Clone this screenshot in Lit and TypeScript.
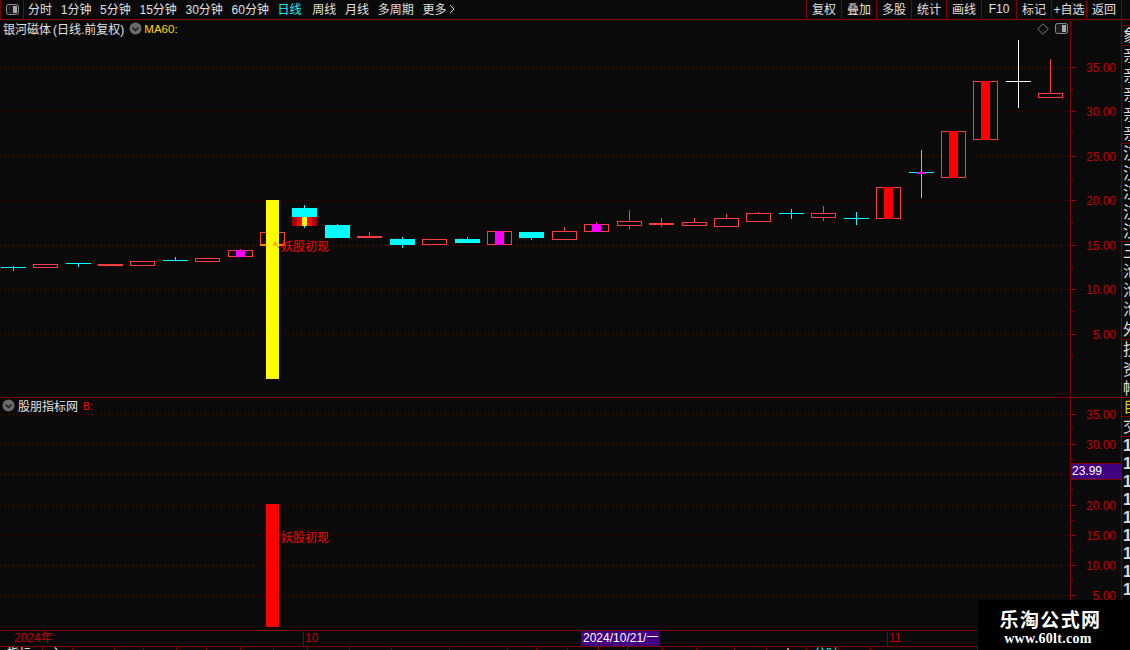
import { LitElement, html, css, svg } from "lit";
import { customElement } from "lit/decorators.js";

const RED = "#ff3c3c";
const CYAN = "#00ffff";
const WHITE = "#ffffff";
const MAGENTA = "#ff00ff";

// x = left edge, top/bottom = body, hi/lo = wick, fill = inner bar colour
interface Candle {
  x: number;
  top: number;
  bottom: number;
  hi?: number;
  lo?: number;
  kind: "hollow" | "solid" | "cyan" | "white";
  fill?: string;
}

const candles: Candle[] = [
  { x: 1, top: 267, bottom: 267, hi: 266, lo: 270, kind: "cyan" },
  { x: 33, top: 264, bottom: 267, kind: "hollow" },
  { x: 66, top: 263, bottom: 263, lo: 266, kind: "cyan" },
  { x: 98, top: 264, bottom: 265, kind: "solid" },
  { x: 130, top: 261, bottom: 265, kind: "hollow" },
  { x: 163, top: 260, bottom: 260, hi: 257, kind: "cyan" },
  { x: 195, top: 258, bottom: 261, kind: "hollow" },
  { x: 228, top: 250, bottom: 256, hi: 249, kind: "hollow", fill: MAGENTA },
  { x: 260, top: 232, bottom: 244, kind: "hollow" },
  { x: 325, top: 225, bottom: 237, hi: 224, kind: "cyan" },
  { x: 357, top: 236, bottom: 237, hi: 232, kind: "solid" },
  { x: 390, top: 239, bottom: 244, hi: 237, lo: 247, kind: "cyan" },
  { x: 422, top: 239, bottom: 244, kind: "hollow" },
  { x: 455, top: 239, bottom: 242, hi: 237, kind: "cyan" },
  { x: 487, top: 231, bottom: 244, kind: "hollow", fill: MAGENTA },
  { x: 519, top: 232, bottom: 237, lo: 239, kind: "cyan" },
  { x: 552, top: 231, bottom: 239, hi: 227, kind: "hollow" },
  { x: 584, top: 224, bottom: 231, hi: 222, kind: "hollow", fill: MAGENTA },
  { x: 617, top: 221, bottom: 225, hi: 210, lo: 228, kind: "hollow" },
  { x: 649, top: 223, bottom: 224, hi: 218, lo: 226, kind: "solid" },
  { x: 682, top: 222, bottom: 225, hi: 218, kind: "hollow" },
  { x: 714, top: 218, bottom: 226, hi: 214, kind: "hollow" },
  { x: 746, top: 213, bottom: 221, hi: 212, kind: "hollow" },
  { x: 779, top: 213, bottom: 213, hi: 209, lo: 218, kind: "cyan" },
  { x: 811, top: 213, bottom: 217, hi: 206, lo: 220, kind: "hollow" },
  { x: 844, top: 218, bottom: 218, hi: 212, lo: 224, kind: "cyan" },
  { x: 876, top: 187, bottom: 218, kind: "hollow", fill: "#ff0000" },
  { x: 909, top: 172, bottom: 172, hi: 150, lo: 197, kind: "cyan", fill: MAGENTA },
  { x: 941, top: 131, bottom: 177, kind: "hollow", fill: "#ff0000" },
  { x: 973, top: 81, bottom: 139, kind: "hollow", fill: "#ff0000" },
  { x: 1006, top: 81, bottom: 81, hi: 40, lo: 107, kind: "white" },
  { x: 1038, top: 93, bottom: 97, hi: 59, kind: "hollow" },
];

const upperTicks = [
  { label: "35.00", y: 67 },
  { label: "30.00", y: 111 },
  { label: "25.00", y: 156 },
  { label: "20.00", y: 200 },
  { label: "15.00", y: 245 },
  { label: "10.00", y: 289 },
  { label: "5.00", y: 334 },
];

// 25.00 sits under the live price tag, so it has no label of its own
const lowerTicks = [
  { label: "35.00", y: 414 },
  { label: "30.00", y: 444 },
  { label: "", y: 474 },
  { label: "20.00", y: 505 },
  { label: "15.00", y: 535 },
  { label: "10.00", y: 565 },
  { label: "5.00", y: 595 },
];

const periods = ["分时", "1分钟", "5分钟", "15分钟", "30分钟", "60分钟", "日线", "周线", "月线", "多周期", "更多"];
const actions = ["复权", "叠加", "多股", "统计", "画线", "F10", "标记", "+自选", "返回"];

const stripUpper = [
  ["象"],
  ["亲", "亲", "亲", "亲", "亲"],
  ["汉", "汉", "汉", "汉", "汉"],
  ["王", "沧", "沧", "沧", "外"],
  ["技", "资", "帐"],
];
const stripLower = ["1", "1", "1", "1", "1", "1", "1", "1", "1"];

// right edges of the tab strip below the time axis
const footEdges = [43, 73, 115, 144, 177, 207, 241, 274, 308, 350, 392, 450, 508, 537, 568, 599, 628, 663, 697, 735, 767, 807, 839, 871, 978];
const footText: Record<number, { text: string; pad: number; cyan?: boolean }> = {
  0: { text: "指标", pad: 7 },
  1: { text: "主", pad: 7 },
  21: { text: "卜", pad: 16 },
  22: { text: "分时", pad: 7, cyan: true },
};

function candleSvg(c: Candle) {
  const mid = c.x + 12.5;
  const color = c.kind === "hollow" || c.kind === "solid" ? RED : c.kind === "cyan" ? CYAN : WHITE;
  const wickTop = c.hi ?? c.top;
  const wickBottom = c.lo ?? c.bottom;
  const isLine = c.top === c.bottom;
  return svg`
    ${c.hi !== undefined || c.lo !== undefined
      ? svg`<line x1=${Math.floor(mid) + 0.5} x2=${Math.floor(mid) + 0.5} y1=${wickTop} y2=${wickBottom + 1} stroke=${color} />`
      : ""}
    ${isLine
      ? svg`<rect x=${c.x} y=${c.top} width="25" height="1" fill=${color} />`
      : c.kind === "hollow"
        ? svg`<rect x=${c.x + 0.5} y=${c.top + 0.5} width="24" height=${c.bottom - c.top} fill="#0a0a0a" stroke=${color} />`
        : svg`<rect x=${c.x} y=${c.top} width="25" height=${c.bottom - c.top + 1} fill=${color} />`}
    ${c.fill
      ? svg`<rect x=${c.x + 8} y=${c.top} width="9" height=${isLine ? 2 : c.bottom - c.top + 1} fill=${c.fill} />`
      : ""}
  `;
}

// the strongest candle: cyan upper half over a red-to-yellow band
function limitCandle() {
  const band = [
    { x: 292, w: 5, c: "#a80000" },
    { x: 297, w: 5, c: "#ff0000" },
    { x: 302, w: 5, c: "#ffff00" },
    { x: 307, w: 5, c: "#ff0000" },
    { x: 312, w: 5, c: "#a80000" },
  ];
  return svg`
    <line x1="304.5" x2="304.5" y1="205" y2="228" stroke=${CYAN} />
    <rect x="292" y="208" width="25" height="9" fill=${CYAN} />
    ${band.map((b) => svg`<rect x=${b.x} y="217" width=${b.w} height="9" fill=${b.c} />`)}
  `;
}

const panelIcon = html`<svg class="panel-icon" width="13" height="12" viewBox="0 0 13 12">
  <rect x="0.5" y="0.5" width="12" height="10" rx="2" fill="#1c1c1c" stroke="#8a8a8a" />
  <rect x="7" y="2" width="4" height="7" fill="#a8a8a8" />
</svg>`;

const roundChevron = html`<svg class="chevron" width="13" height="13" viewBox="0 0 13 13">
  <circle cx="6.5" cy="6.5" r="6" fill="#6a6a6a" />
  <path d="M3.5 5.5 L6.5 8.5 L9.5 5.5" fill="none" stroke="#161616" stroke-width="1.3" />
</svg>`;

@customElement("app-root")
export class AppRoot extends LitElement {
  static styles = css`
    :host {
      display: block;
      position: relative;
      width: 1130px;
      height: 650px;
      overflow: hidden;
      background: #0a0a0a;
      color: #e0e0e0;
      font-family: "Liberation Sans", "Noto Sans CJK SC", sans-serif;
      font-size: 12px;
    }
    .toolbar {
      display: flex;
      align-items: center;
      height: 19px;
      border-bottom: 1px solid #800000;
    }
    .logo-box {
      display: flex;
      align-items: center;
      justify-content: center;
      box-sizing: border-box;
      width: 24px;
      height: 19px;
      margin-right: 4px;
      border-left: 1px solid #800000;
      border-right: 1px solid #800000;
    }
    .periods {
      display: flex;
      align-items: center;
      gap: 8.7px;
      flex: 1;
      padding-bottom: 2px;
    }
    .period.active {
      color: #00ffff;
      margin-right: 2px;
    }
    .more-arrow {
      margin-left: 3px;
    }
    .actions {
      display: flex;
      margin-right: 8px;
      border-right: 1px solid #800000;
    }
    .action {
      display: flex;
      align-items: center;
      justify-content: center;
      box-sizing: border-box;
      width: 35px;
      height: 19px;
      padding-bottom: 2px;
      border-left: 1px solid #800000;
      white-space: nowrap;
    }
    .panel {
      display: flex;
    }
    .panel.upper {
      height: 377px;
      border-bottom: 1px solid #800000;
    }
    .panel.lower {
      height: 232px;
    }
    .plot {
      position: relative;
      width: 1070px;
      flex: none;
    }
    .plot svg.canvas {
      position: absolute;
      left: 0;
      top: 0;
      display: block;
    }
    .head {
      position: absolute;
      left: 3px;
      top: 0;
      display: flex;
      align-items: center;
      height: 17px;
      white-space: nowrap;
    }
    .head .terms {
      margin-left: 2px;
    }
    .head .chevron {
      margin: 0 2px 0 5px;
    }
    .ma {
      color: #ffd700;
      font-size: 11.5px;
    }
    .lower .head {
      top: -1px;
      left: 0;
    }
    .lower .head .chevron {
      margin: 0 3px 0 2px;
    }
    .lower .head .series {
      margin-left: 5px;
      color: #ff0000;
      font-size: 10.5px;
    }
    .tools {
      position: absolute;
      top: 3px;
      right: 2px;
      display: flex;
      align-items: center;
      gap: 6px;
    }
    .signal {
      position: absolute;
      left: 281px;
      color: #ff0000;
      line-height: 14px;
      white-space: nowrap;
    }
    .upper .signal {
      top: 220px;
    }
    .lower .signal {
      top: 133px;
    }
    .axis {
      position: relative;
      box-sizing: border-box;
      width: 52px;
      flex: none;
      border-left: 1px solid #800000;
      border-right: 1px solid #800000;
    }
    .axis svg {
      display: block;
    }
    .axis text {
      fill: #c40000;
      font-family: "Liberation Sans", sans-serif;
      font-size: 12px;
    }
    .price-tag {
      position: absolute;
      left: 0;
      right: 0;
      top: 65px;
      box-sizing: border-box;
      height: 17px;
      padding-left: 1px;
      background: #400080;
      border-top: 1px solid #800000;
      border-bottom: 1px solid #800000;
      color: #fff;
      line-height: 15px;
    }
    .strip {
      flex: 1;
      min-width: 0;
      overflow: hidden;
    }
    .strip-top {
      height: 5px;
      border-bottom: 1px solid #800000;
    }
    .strip-group {
      border-bottom: 1px solid #800000;
    }
    .strip-cell {
      height: 19.4px;
      padding-left: 1px;
      line-height: 19px;
      font-size: 16px;
      color: #dcdcdc;
      white-space: nowrap;
    }
    .strip-cell.flag {
      height: 18px;
      line-height: 18px;
      color: #d8c800;
      border-bottom: 1px solid #800000;
    }
    .strip-cell.kind {
      height: 19px;
      border-bottom: 1px solid #800000;
    }
    .strip-cell.num {
      height: 18px;
      line-height: 18px;
      font-weight: bold;
    }
    .timebar {
      position: relative;
      box-sizing: border-box;
      height: 17px;
      border-top: 1px solid #800000;
      border-bottom: 1px solid #800000;
      color: #c40000;
      line-height: 15px;
    }
    .mark {
      position: absolute;
      top: 0;
      height: 15px;
      padding-left: 1px;
    }
    .mark.tick {
      border-left: 1px solid #800000;
    }
    .date-tag {
      position: absolute;
      top: 0;
      left: 581px;
      box-sizing: border-box;
      width: 79px;
      height: 15px;
      padding-left: 1px;
      background: #400080;
      color: #fff;
      border-left: 1px solid #800000;
      border-right: 1px solid #800000;
      white-space: nowrap;
    }
    .foot {
      display: flex;
      height: 3px;
      overflow: hidden;
    }
    .foot-cell {
      box-sizing: border-box;
      flex: none;
      height: 3px;
      border-right: 1px solid #800000;
      line-height: 14px;
      color: #fff;
      overflow: hidden;
      white-space: nowrap;
    }
    .foot-cell.cyan {
      color: #00ffff;
    }
    .watermark {
      position: absolute;
      left: 978px;
      top: 600px;
      box-sizing: border-box;
      width: 152px;
      height: 50px;
      display: flex;
      flex-direction: column;
      align-items: center;
      padding-right: 7px;
      background: #000;
      color: #fff;
    }
    .wm-title {
      margin-top: 6px;
      font-family: "Noto Sans CJK SC", sans-serif;
      font-size: 19px;
      font-weight: 700;
      letter-spacing: 1.4px;
      line-height: 26px;
    }
    .wm-url {
      padding-right: 5px;
      font-family: "Liberation Serif", serif;
      font-size: 14px;
      font-weight: 700;
      letter-spacing: 0.3px;
      line-height: 14px;
    }
  `;

  private grid(ticks: { y: number }[]) {
    return svg`${ticks.map(
      (t) => svg`<line x1="0" x2="1070" y1=${t.y + 0.5} y2=${t.y + 0.5}
        stroke="#500000" stroke-dasharray="1 3" />`
    )}`;
  }

  private axis(ticks: { label: string; y: number }[], offset: number, height: number) {
    const step = ticks[1].y - ticks[0].y;
    return html`<svg width="50" height=${height}>
      ${ticks.map(
        (t) => svg`
          <line x1="0" x2="5" y1=${t.y - offset + 0.5} y2=${t.y - offset + 0.5} stroke="#a00000" />
          <line x1="0" x2="2" y1=${Math.round(t.y - offset + step / 2) + 0.5} y2=${Math.round(t.y - offset + step / 2) + 0.5} stroke="#a00000" />
          ${t.label ? svg`<text x="45" y=${t.y - offset + 5} text-anchor="end">${t.label}</text>` : ""}
        `
      )}
    </svg>`;
  }

  private foot() {
    return footEdges.map((edge, i) => {
      const width = edge - (i ? footEdges[i - 1] : 0);
      const item = footText[i];
      return html`<div
        class="foot-cell ${item?.cyan ? "cyan" : ""}"
        style="width: ${width}px; padding-left: ${item?.pad ?? 0}px"
      >${item?.text ?? ""}</div>`;
    });
  }

  render() {
    return html`
      <div class="toolbar">
        <div class="logo-box">${panelIcon}</div>
        <div class="periods">
          ${periods.map(
            (p) => html`<span class="period ${p === "日线" ? "active" : ""}">${p}${p === "更多"
              ? html`<svg class="more-arrow" width="6" height="10" viewBox="0 0 6 10">
                  <path d="M1 1 L5 5 L1 9" fill="none" stroke="#e0e0e0" />
                </svg>`
              : ""}</span>`
          )}
        </div>
        <div class="actions">${actions.map((a) => html`<div class="action">${a}</div>`)}</div>
      </div>

      <div class="panel upper">
        <div class="plot">
          <svg class="canvas" width="1070" height="377" viewBox="0 20 1070 377">
            ${this.grid(upperTicks)}
            ${candles.map(candleSvg)}
            ${limitCandle()}
            <rect x="260" y="244" width="25" height="2" fill="#ff8000" />
            <rect x="266" y="200" width="13" height="179" fill="#ffff00" />
            <path d="M279 248 L274 243 M274 243 L274 246 M274 243 L277 243" stroke="#ff8000" fill="none" />
          </svg>
          <div class="head">
            <span>银河磁体</span><span class="terms">(日线.前复权)</span>${roundChevron}<span class="ma">MA60:</span>
          </div>
          <div class="tools">
            <svg width="12" height="12" viewBox="0 0 12 12">
              <path d="M6 0.7 L11.3 6 L6 11.3 L0.7 6 Z" fill="none" stroke="#808080" />
            </svg>
            ${panelIcon}
          </div>
          <div class="signal">妖股初现</div>
        </div>
        <div class="axis">${this.axis(upperTicks, 20, 377)}</div>
        <div class="strip">
          <div class="strip-top"></div>
          ${stripUpper.map(
            (group) => html`<div class="strip-group">
              ${group.map((ch) => html`<div class="strip-cell">${ch}</div>`)}
            </div>`
          )}
        </div>
      </div>

      <div class="panel lower">
        <div class="plot">
          <svg class="canvas" width="1070" height="232" viewBox="0 398 1070 232">
            ${this.grid(lowerTicks)}
            <rect x="266" y="504" width="13" height="123" fill="#ff0000" />
          </svg>
          <div class="head">
            ${roundChevron}股朋指标网<span class="series">B:</span>
          </div>
          <div class="signal">妖股初现</div>
        </div>
        <div class="axis">
          ${this.axis(lowerTicks, 398, 232)}
          <div class="price-tag">23.99</div>
        </div>
        <div class="strip">
          <div class="strip-cell flag">自</div>
          <div class="strip-cell kind">交</div>
          ${stripLower.map((n) => html`<div class="strip-cell num">${n}</div>`)}
        </div>
      </div>

      <div class="timebar">
        <span class="mark" style="left: 13px">2024年</span>
        <span class="mark tick" style="left: 303px">10</span>
        <div class="date-tag">2024/10/21/一</div>
        <span class="mark tick" style="left: 887px">11</span>
      </div>

      <div class="foot">${this.foot()}</div>

      <div class="watermark">
        <div class="wm-title">乐淘公式网</div>
        <div class="wm-url">www.60lt.com</div>
      </div>
    `;
  }
}
